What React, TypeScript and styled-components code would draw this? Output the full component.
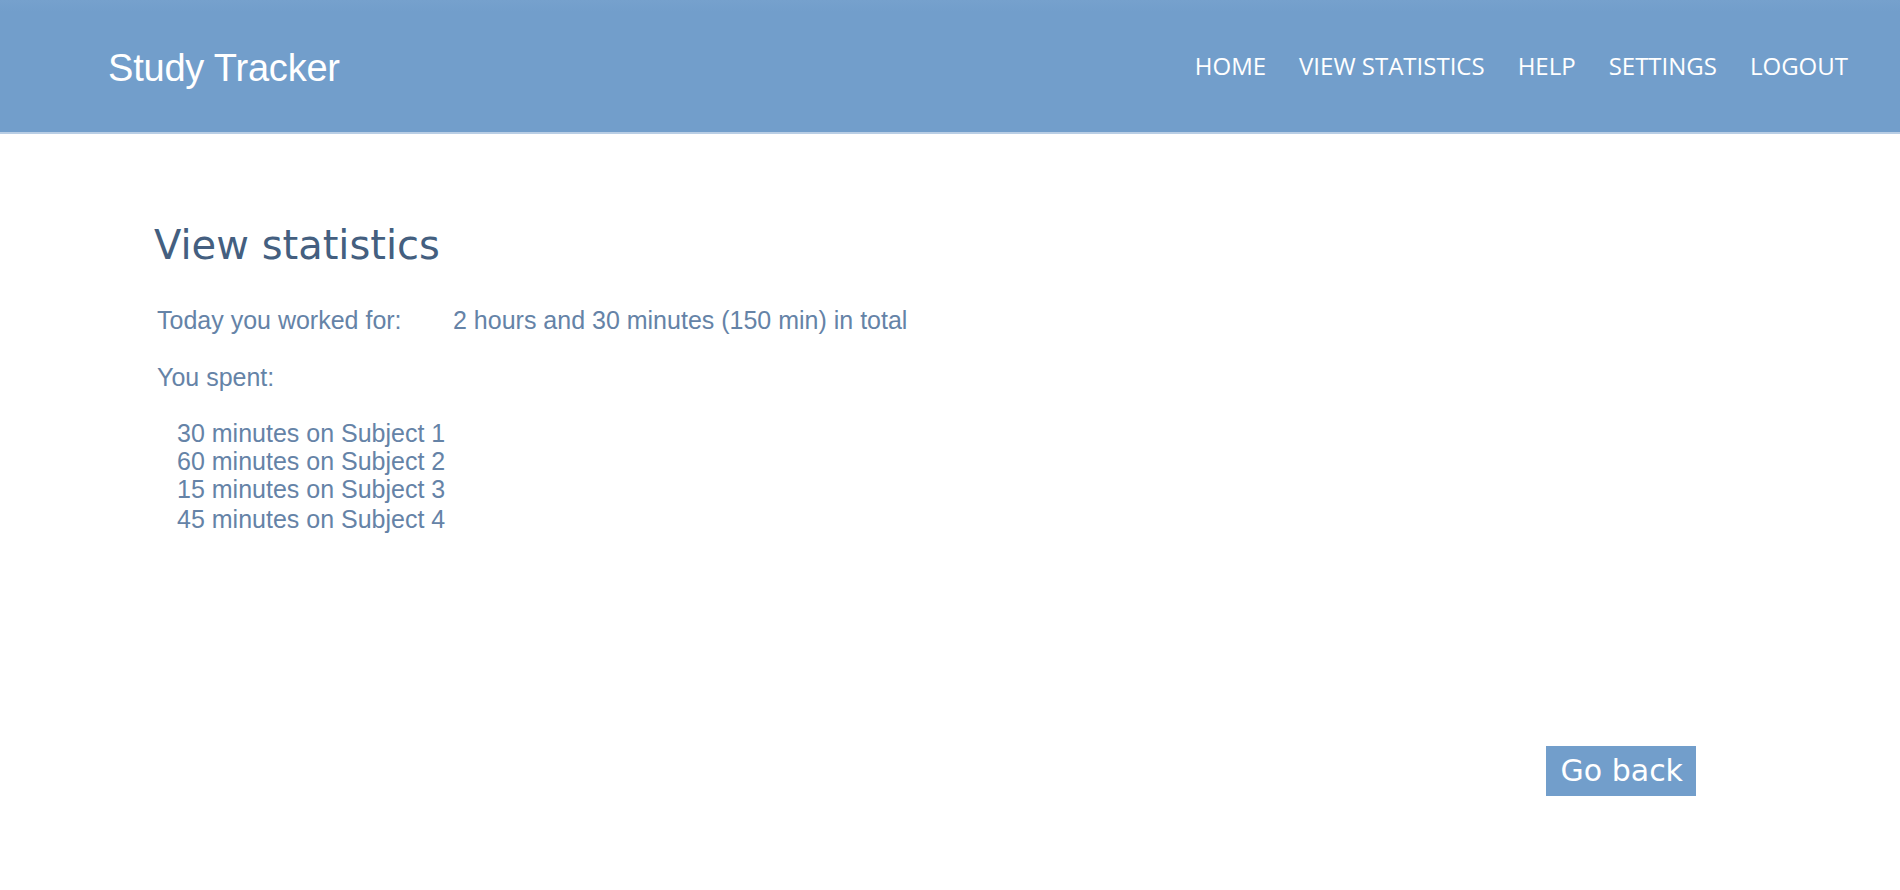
import styled, { createGlobalStyle } from "styled-components";

const navItems = ["HOME", "VIEW STATISTICS", "HELP", "SETTINGS", "LOGOUT"];

const subjects = [
  { minutes: 30, name: "Subject 1" },
  { minutes: 60, name: "Subject 2" },
  { minutes: 15, name: "Subject 3" },
  { minutes: 45, name: "Subject 4" },
];

export default function App() {
  return (
    <Wrapper>
      <GlobalStyle />
      <Header>
        <Brand>Study Tracker</Brand>
        <Nav>
          {navItems.map((item) => (
            <NavLink key={item}>{item}</NavLink>
          ))}
        </Nav>
      </Header>

      <Main>
        <Title>View statistics</Title>

        <Stats>
          <Row>
            <Label>Today you worked for:</Label>
            <Value>2 hours and 30 minutes (150 min) in total</Value>
          </Row>

          <Spent>You spent:</Spent>

          <SubjectList>
            {subjects.map((s) => (
              <SubjectItem key={s.name}>
                {s.minutes} minutes on {s.name}
              </SubjectItem>
            ))}
          </SubjectList>
        </Stats>

        <Footer>
          <BackButton>Go back</BackButton>
        </Footer>
      </Main>
    </Wrapper>
  );
}

const GlobalStyle = createGlobalStyle`
  html, body {
    margin: 0;
    padding: 0;
    background: #ffffff;
  }
`;

const Wrapper = styled.div`
  width: 100%;
  min-height: 890px;
  background: #ffffff;
`;

const Header = styled.header`
  height: 132px;
  display: flex;
  align-items: flex-start;
  justify-content: space-between;
  background: linear-gradient(180deg, #76a1cd 0px, #729ecb 12px, #729ecb 100%);
  border-bottom: 2px solid #b9cee5;
  padding: 0 52px 0 108px;
  box-sizing: content-box;
`;

const Brand = styled.div`
  margin-top: 46px;
  font-family: "Liberation Sans", Arial, sans-serif;
  font-size: 38px;
  line-height: 44px;
  letter-spacing: -0.2px;
  color: #ffffff;
`;

const Nav = styled.nav`
  display: flex;
  gap: 33px;
  margin-top: 50px;
`;

const NavLink = styled.a`
  font-family: "Open Sans", sans-serif;
  font-size: 24px;
  line-height: 32px;
  color: #ffffff;
  text-decoration: none;
  cursor: pointer;
`;

const Main = styled.main`
  padding: 88px 204px 0 154px;
`;

const Title = styled.h1`
  margin: 0;
  font-family: "DejaVu Sans", Verdana, sans-serif;
  font-weight: normal;
  font-size: 40px;
  line-height: 46px;
  color: #445f80;
`;

const Stats = styled.section`
  margin-top: 37px;
  padding-left: 3px;
  font-family: "Liberation Sans", Arial, sans-serif;
  font-size: 25px;
  color: #6583a7;
`;

const Row = styled.div`
  display: grid;
  grid-template-columns: 296px auto;
  line-height: 30px;
`;

const Label = styled.span``;

const Value = styled.span``;

const Spent = styled.div`
  margin-top: 27px;
  line-height: 30px;
`;

const SubjectList = styled.ul`
  list-style: none;
  margin: 27px 0 0;
  padding: 0 0 0 20px;
`;

const SubjectItem = styled.li`
  line-height: 28px;

  &:last-child {
    margin-top: 2px;
  }
`;

const Footer = styled.div`
  display: flex;
  justify-content: flex-end;
  margin-top: 213px;
`;

const BackButton = styled.button`
  height: 50px;
  padding: 0 13px 0 15px;
  border: none;
  background: #729ecb;
  color: #ffffff;
  font-family: "DejaVu Sans", Verdana, sans-serif;
  font-size: 30px;
  line-height: 50px;
  cursor: pointer;
`;
